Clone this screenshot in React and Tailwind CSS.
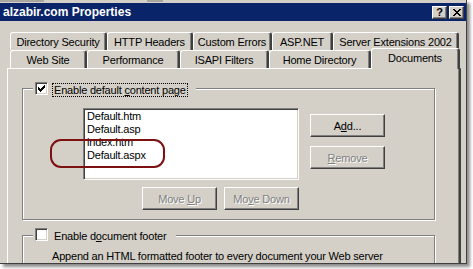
import React from 'react';

const ROW1 = [
  { label: 'Directory Security', w: 'w-[97px]' },
  { label: 'HTTP Headers', w: 'w-[86px]' },
  { label: 'Custom Errors', w: 'w-[79px]' },
  { label: 'ASP.NET', w: 'w-[61px]' },
  { label: 'Server Extensions 2002', w: 'w-[126px]' }
];

const ROW2 = [
  { label: 'Web Site', w: 'w-[77px]' },
  { label: 'Performance', w: 'w-[93px]' },
  { label: 'ISAPI Filters', w: 'w-[89px]' },
  { label: 'Home Directory', w: 'w-[102px]' },
  { label: 'Documents', w: 'w-[89px]', active: true }
];

const FILES = ['Default.htm', 'Default.asp', 'index.htm', 'Default.aspx'];

const raised = 'border border-t-white border-l-white border-r-[#404040] border-b-[#404040] shadow-[inset_-1px_-1px_0_#808080]';
const sunken = 'border border-t-[#808080] border-l-[#808080] border-r-white border-b-white shadow-[inset_1px_1px_0_#404040,inset_-1px_-1px_0_#d4d0c8]';
const etched = 'border border-[#808080] shadow-[inset_1px_1px_0_#fff,1px_1px_0_#fff]';

const Tab = ({ label, w, active }) => (
  <div className={`${w} ${active ? '-mt-[2px] h-[21px] relative z-10 pb-[3px]' : 'h-[18px]'} flex items-center justify-center bg-[#d4d0c8] border-t border-l border-white border-r-2 border-r-[#404040] rounded-t-[3px] shadow-[inset_-1px_0_0_#808080]`}>
    {label}
  </div>
);

const Button = ({ children, disabled }) => (
  <div className={`${raised} w-[75px] h-[23px] flex items-center justify-center bg-[#d4d0c8] ${disabled ? 'text-[#808080] [text-shadow:1px_1px_0_#fff]' : 'text-black'}`}>
    <span>{children}</span>
  </div>
);

const Check = ({ checked }) => (
  <div className={`${sunken} w-[13px] h-[13px] bg-white flex items-center justify-center shrink-0`}>
    {checked && (
      <svg width="7" height="7" viewBox="0 0 7 7" shapeRendering="crispEdges">
        <path fill="#000" d="M6 0h1v1h-1zM5 1h2v1h-2zM0 2h1v1h-1zM4 2h3v1h-3zM0 3h2v1h-2zM3 3h3v1h-3zM0 4h5v1h-5zM1 5h3v1h-3zM2 6h1v1h-1z" />
      </svg>
    )}
  </div>
);

const U = ({ children }) => <span className="underline underline-offset-[1px]">{children}</span>;

export default function App() {
  return (
    <div className="w-[473px] h-[269px] bg-white overflow-hidden relative font-['Liberation_Sans',Arial,sans-serif] text-[11px] leading-[12px] tracking-[-0.2px] text-black">
      <div className="w-[467px] h-[264px] bg-[#d4d0c8] border-r border-b border-[#404040] shadow-[3px_3px_3px_rgba(0,0,0,0.45)] overflow-hidden flex flex-col">
        {/* strip of the window behind */}
        <div className="h-[3px] flex items-start gap-[3px]">
          <div className="w-[44px] h-[2px] bg-[#a9a6a0]" />
          <div className="ml-[100px] w-[16px] h-[2px] bg-[#a9a6a0]" />
        </div>

        {/* Title bar */}
        <div className="h-[18px] bg-[#0a246a] flex items-center justify-between pl-[3px] pr-[2px]">
          <span className="text-white font-bold text-[12px] tracking-normal">alzabir.com Properties</span>
          <div className="flex gap-[2px]">
            <div className={`${raised} w-[15px] h-[13px] bg-[#d4d0c8] flex items-center justify-center font-bold text-[11px] leading-none tracking-normal`}>?</div>
            <div className={`${raised} w-[15px] h-[13px] bg-[#d4d0c8] flex items-center justify-center`}>
              <svg width="8" height="7" viewBox="0 0 8 7" shapeRendering="crispEdges">
                <path fill="#000" d="M0 0h2v1h-2zM6 0h2v1h-2zM1 1h2v1h-2zM5 1h2v1h-2zM2 2h4v1h-4zM3 3h2v1h-2zM2 4h4v1h-4zM1 5h2v1h-2zM5 5h2v1h-2zM0 6h2v1h-2zM6 6h2v1h-2z" />
              </svg>
            </div>
          </div>
        </div>

        {/* Tabs */}
        <div className="mt-[11px] flex pl-[10px]">
          {ROW1.map(t => <Tab key={t.label} {...t} />)}
        </div>
        <div className="flex items-start pl-[10px] h-[18px]">
          {ROW2.map(t => <Tab key={t.label} {...t} />)}
        </div>

        {/* Panel */}
        <div className="ml-[7px] w-[454px] flex-1 border-t border-l border-white border-r-2 border-r-[#404040] shadow-[inset_-1px_0_0_#808080] pt-[19px] pl-[14px] overflow-hidden">
          {/* Default content page group */}
          <div className={`${etched} w-[413px] h-[132px]`}>
            <div className="-mt-[7px] ml-[10px] w-fit flex items-start bg-[#d4d0c8] pl-[2px] pr-[8px]">
              <Check checked />
              <span className="ml-[4px] mt-[1px] border border-dotted border-black px-[1px]">
                Enable default <U>c</U>ontent page
              </span>
            </div>
            <div className="mt-[11px] ml-[60px] flex items-start">
              <div className={`${sunken} w-[216px] h-[72px] bg-white pt-[1px] pl-[3px] leading-[13px]`}>
                {FILES.map(f => <div key={f}>{f}</div>)}
              </div>
              <div className="ml-[11px] pt-[6px] flex flex-col gap-[9px]">
                <Button>A<U>d</U>d...</Button>
                <Button disabled><U>R</U>emove</Button>
              </div>
            </div>
            <div className="mt-[7px] ml-[119px] flex gap-[7px]">
              <Button disabled>Move <U>U</U>p</Button>
              <Button disabled>Mo<U>v</U>e Down</Button>
            </div>
          </div>

          {/* Footer group */}
          <div className={`${etched} w-[413px] h-[60px] mt-[15px]`}>
            <div className="-mt-[8px] ml-[10px] w-fit flex items-start bg-[#d4d0c8] pl-[2px] pr-[8px]">
              <Check />
              <span className="ml-[4px] mt-[1px] border border-transparent px-[1px]">
                Enable d<U>o</U>cument footer
              </span>
            </div>
            <p className="mt-[7px] ml-[29px] leading-[13px]">
              Append an HTML formatted footer to every document your Web server
            </p>
          </div>
        </div>
      </div>

      {/* red annotation */}
      <div className="absolute left-[50px] top-[139px] w-[115px] h-[29px] border-2 border-[#7d1010] rounded-[11px]" />
    </div>
  );
}
